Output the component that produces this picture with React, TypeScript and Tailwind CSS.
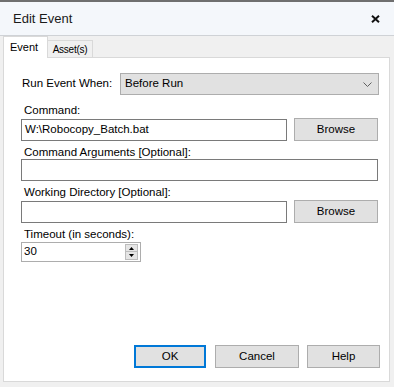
import React from "react";

function Btn({ label, w, primary }: { label: string; w: string; primary?: boolean }) {
  return (
    <button
      className={`${w} h-[23px] bg-[#e1e1e1] text-[11.5px] text-black flex items-center justify-center ${
        primary ? "border-2 border-[#0078d7]" : "border border-[#adadad]"
      }`}
    >
      {label}
    </button>
  );
}

function TextBox({ w, value }: { w: string; value?: string }) {
  return (
    <div className={`${w} h-[22px] border border-[#7a7a7a] bg-white flex items-center pl-[3px] text-[11.5px] text-black`}>
      {value}
    </div>
  );
}

export default function App() {
  return (
    <div className="w-[394px] h-[387px] bg-[#f0f0f0] border-t-2 border-[#6f6f6f] flex flex-col overflow-hidden font-['Liberation_Sans',Arial,sans-serif] text-black">
      {/* title bar */}
      <div className="h-[34px] bg-[#f4f7fb] border-b border-[#cfd2d6] flex items-center justify-between pl-[13px] pr-[14px]">
        <span className="text-[13px] text-[#1a1a1a]">Edit Event</span>
        <svg width="9" height="8" viewBox="0 0 9 8">
          <path d="M1 0.8 L8 7.2 M8 0.8 L1 7.2" stroke="#111" strokeWidth="2" />
        </svg>
      </div>

      {/* tabs */}
      <div className="h-[21px] flex items-end pl-[3px]">
        <div className="relative z-10 h-[22px] mb-[-1px] w-[45px] bg-white border border-b-0 border-[#d9d9d9] flex items-start pt-[2px] pl-[6px] text-[11px]">
          Event
        </div>
        <div className="h-[17px] w-[45px] bg-[#f0f0f0] border border-b-0 border-l-0 border-[#d9d9d9] flex items-center justify-center text-[10px] tracking-tight">
          Asset(s)
        </div>
      </div>

      {/* panel */}
      <div className="ml-[3px] w-[387px] h-[325px] bg-white border border-[#d9d9d9] flex flex-col pt-[15px] pl-[17px] pr-[9px] pb-[13px] text-[11.5px]">
        <div className="flex items-center h-[22px]">
          <span className="w-[99px] pl-[1px]">Run Event When:</span>
          <div className="w-[259px] h-[22px] bg-[#e1e1e1] border border-[#adadad] flex items-center justify-between pl-[4px] pr-[6px]">
            <span>Before Run</span>
            <svg width="9" height="5" viewBox="0 0 9 5">
              <path d="M0.5 0.5 L4.5 4.5 L8.5 0.5" stroke="#606060" strokeWidth="1" fill="none" />
            </svg>
          </div>
        </div>

        <div className="mt-[7px] h-[16px] pl-[3px] leading-[16px]">Command:</div>
        <div className="flex items-center gap-[7px]">
          <TextBox w="w-[266px]" value="W:\Robocopy_Batch.bat" />
          <Btn label="Browse" w="w-[84px]" />
        </div>

        <div className="mt-[4px] h-[14px] pl-[3px] leading-[14px]">Command Arguments [Optional]:</div>
        <TextBox w="w-[357px]" />

        <div className="mt-[4px] h-[15px] pl-[3px] leading-[15px]">Working Directory [Optional]:</div>
        <div className="flex items-center gap-[7px]">
          <TextBox w="w-[266px]" />
          <Btn label="Browse" w="w-[84px]" />
        </div>

        <div className="mt-[4px] h-[15px] pl-[3px] leading-[15px]">Timeout (in seconds):</div>
        <div className="w-[120px] h-[20px] border border-[#adadad] bg-white flex items-center justify-between pl-[2px] pr-[2px]">
          <span>30</span>
          <div className="flex flex-col w-[13px] h-[16px]">
            <div className="h-[8px] bg-[#e5e5e5] border border-[#bdbdbd] flex items-center justify-center">
              <svg width="5" height="3" viewBox="0 0 5 3">
                <path d="M0 3 L2.5 0 L5 3 Z" fill="#000" />
              </svg>
            </div>
            <div className="h-[8px] bg-[#e5e5e5] border border-t-0 border-[#bdbdbd] flex items-center justify-center">
              <svg width="5" height="3" viewBox="0 0 5 3">
                <path d="M0 0 L5 0 L2.5 3 Z" fill="#000" />
              </svg>
            </div>
          </div>
        </div>

        <div className="mt-auto flex justify-end items-center">
          <Btn label="OK" w="w-[72px]" primary />
          <div className="w-[9px]" />
          <Btn label="Cancel" w="w-[84px]" />
          <div className="w-[8px]" />
          <Btn label="Help" w="w-[73px]" />
        </div>
      </div>
    </div>
  );
}
